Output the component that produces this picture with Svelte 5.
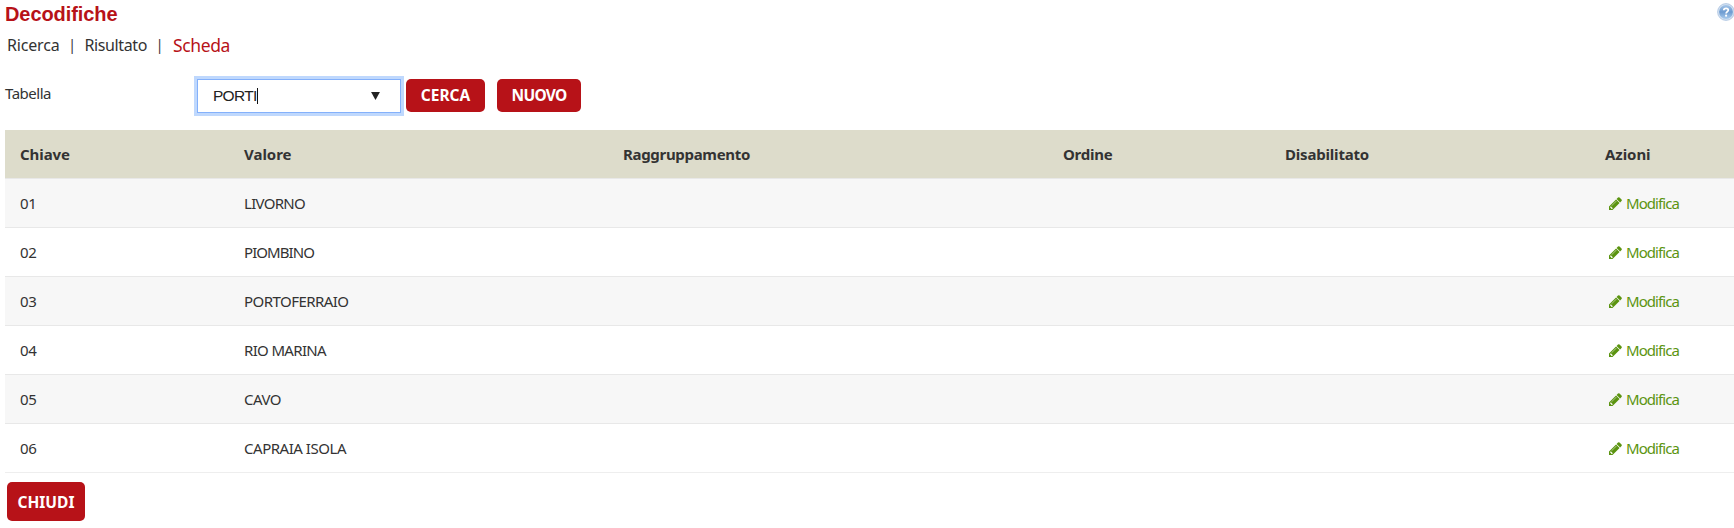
<script>
  const columns = [
    { label: 'Chiave', size: 50, width: 224 },
    { label: 'Valore', size: 47.5, width: 379 },
    { label: 'Raggruppamento', size: 127, width: 440 },
    { label: 'Ordine', size: 49.5, width: 222 },
    { label: 'Disabilitato', size: 84, width: 320 },
    { label: 'Azioni', size: 45.5, width: 144 }
  ];

  const rows = [
    { key: '01', value: 'LIVORNO', size: 61 },
    { key: '02', value: 'PIOMBINO', size: 70 },
    { key: '03', value: 'PORTOFERRAIO', size: 104.5 },
    { key: '04', value: 'RIO MARINA', size: 82 },
    { key: '05', value: 'CAVO', size: 37 },
    { key: '06', value: 'CAPRAIA ISOLA', size: 102 }
  ];

  // Tracks a label so that its text spans the given width.
  function fit(node, size) {
    const spacing = (size - node.getBoundingClientRect().width) / node.textContent.length;
    node.style.letterSpacing = `${spacing}px`;
  }
</script>

<div class="page">
  <header>
    <h1><span use:fit={112.5}>Decodifiche</span></h1>
    <svg class="help" width="18" height="18" viewBox="0 0 18 18" aria-label="?">
      <defs>
        <linearGradient id="ball" x1="0" y1="0" x2="0" y2="1">
          <stop offset="0" stop-color="#a5c5e8" />
          <stop offset=".5" stop-color="#6d9bd0" />
          <stop offset="1" stop-color="#a9cbed" />
        </linearGradient>
      </defs>
      <circle cx="9" cy="9" r="8.4" fill="#d3e1f1" stroke="#a9c2df" stroke-width=".8" />
      <circle cx="9" cy="9" r="6.9" fill="url(#ball)" />
      <path d="M6.8 7.2C6.8 4.6 11.3 4.7 11.3 7.1C11.3 8.7 9.1 8.8 9.1 10.4" fill="none" stroke="#fff" stroke-width="1.7" />
      <circle cx="9.1" cy="12.7" r="1.1" fill="#fff" />
    </svg>
  </header>

  <nav>
    <span class="step"><span use:fit={52.5}>Ricerca</span></span>
    <span class="bar">|</span>
    <span class="step"><span use:fit={62.5}>Risultato</span></span>
    <span class="bar">|</span>
    <span class="step current"><span use:fit={57}>Scheda</span></span>
  </nav>

  <div class="search">
    <label for="table"><span use:fit={46}>Tabella</span></label>
    <div class="combo" id="table">
      <span class="entry" use:fit={43.5}>PORTI</span><i class="caret"></i>
      <svg width="9" height="8" viewBox="0 0 10 9"><path d="M0 0H10L5 9Z" fill="#222" /></svg>
    </div>
    <button class="find"><span use:fit={49.5}>CERCA</span></button>
    <button class="new"><span use:fit={55}>NUOVO</span></button>
  </div>

  <table>
    <colgroup>
      {#each columns as c}<col style="width: {c.width}px" />{/each}
    </colgroup>
    <thead>
      <tr>
        {#each columns as c}<th><span use:fit={c.size}>{c.label}</span></th>{/each}
      </tr>
    </thead>
    <tbody>
      {#each rows as r}
        <tr>
          <td><span use:fit={16.5}>{r.key}</span></td>
          <td><span use:fit={r.size}>{r.value}</span></td>
          <td></td>
          <td></td>
          <td></td>
          <td>
            <a class="edit">
              <svg width="13" height="13" viewBox="0 0 1536 1536"><path fill="#5b9410" d="M363 1408l91-91-235-235-91 91v107h128v128h107zm523-928q0-22-22-22-10 0-17 7l-542 542q-7 7-7 17 0 22 22 22 10 0 17-7l542-542q7-7 7-17zm-54-192l416 416-832 832h-416v-416zm683 96q0 53-37 90l-166 166-416-416 166-165q36-38 90-38 53 0 91 38l235 234q37 39 37 91z" /></svg>
              <span use:fit={53}>Modifica</span>
            </a>
          </td>
        </tr>
      {/each}
    </tbody>
  </table>

  <button class="close"><span use:fit={57}>CHIUDI</span></button>
</div>

<style>
  :global(body) {
    background: #fff;
    overflow: hidden;
  }
  .page {
    box-sizing: border-box;
    height: 528px;
    padding-left: 5px;
    font: 15px/20px 'Noto Sans', 'Open Sans', sans-serif;
    color: #333;
  }
  span {
    white-space: nowrap;
  }
  header {
    display: flex;
    justify-content: space-between;
    height: 30px;
  }
  h1 {
    margin: 3px 0 0;
    font: bold 20px/23px 'Liberation Sans', Arial, sans-serif;
    color: #b71218;
  }
  .help {
    margin: 3px -1px 0 0;
  }
  nav {
    display: flex;
    align-items: center;
    height: 30px;
    padding-left: 2px;
    font-size: 16px;
  }
  .bar {
    width: 25px;
    font-size: 14px;
    text-align: center;
  }
  .current {
    margin-left: 1px;
    font-size: 17.5px;
    color: #b71218;
  }
  .search {
    display: flex;
    height: 70px;
    padding-top: 19px;
    box-sizing: border-box;
  }
  label {
    width: 192px;
    padding-top: 4px;
  }
  .combo {
    box-sizing: border-box;
    display: flex;
    align-items: center;
    width: 204px;
    height: 34px;
    padding: 0 20px 0 15px;
    border: 1px solid #84b1fb;
    box-shadow: 0 0 0 3px #bfd8fd;
    font: 15.5px/20px 'Liberation Sans', Arial, sans-serif;
    color: #222;
  }
  .caret {
    width: 1px;
    height: 16px;
    background: #111;
  }
  .combo svg {
    margin-left: auto;
  }
  button {
    flex: none;
    padding: 0;
    border: 0;
    border-radius: 5px;
    background: #b71218;
    color: #fff;
    font: bold 15.5px/33px 'Noto Sans', 'Open Sans', sans-serif;
    text-align: center;
  }
  .find {
    width: 79px;
    height: 33px;
    margin: 0 12px 0 5px;
  }
  .new {
    width: 84px;
    height: 33px;
  }
  table {
    width: 1729px;
    table-layout: fixed;
    border-collapse: separate;
    border-spacing: 0;
  }
  th,
  td {
    box-sizing: border-box;
    padding: 0 0 0 15px;
    text-align: left;
    vertical-align: middle;
  }
  th {
    height: 48px;
    padding-bottom: 1px;
    background: #dddccb;
    color: #333;
  }
  td {
    height: 49px;
    border-top: 1px solid #e8e8e8;
  }
  tbody tr:nth-child(odd) td {
    background: #f7f7f7;
  }
  tbody tr:last-child td {
    height: 50px;
    border-bottom: 1px solid #eee;
  }
  .edit {
    display: flex;
    align-items: center;
    gap: 4px;
    padding-left: 4px;
    color: #5b9410;
  }
  .close {
    width: 78px;
    height: 39px;
    margin: 9px 0 0 2px;
    line-height: 40px;
  }
</style>
